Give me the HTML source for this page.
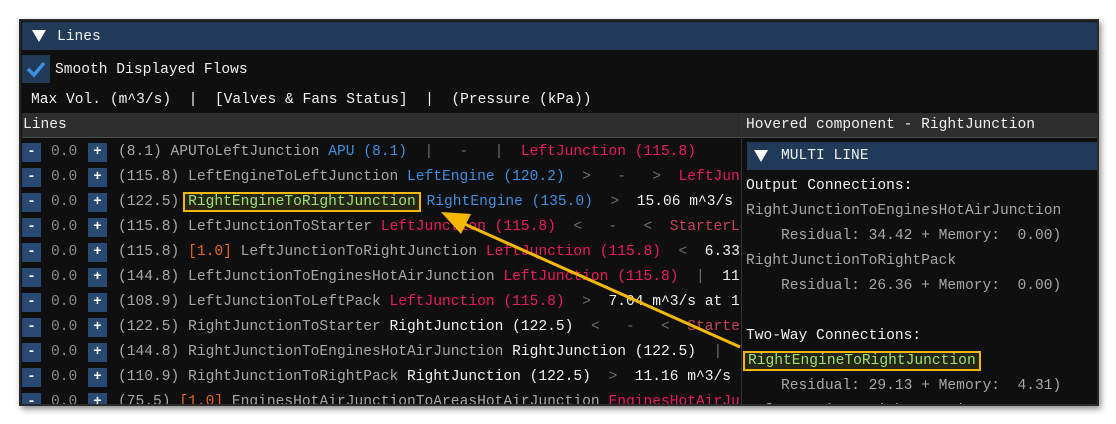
<!DOCTYPE html>
<html><head><meta charset="utf-8"><style>
*{margin:0;padding:0;box-sizing:border-box}
body{width:1116px;height:424px;background:#fff;position:relative;overflow:hidden;font-family:"Liberation Mono","DejaVu Sans Mono",monospace;font-size:14.6px;color:#e6e6e6}
.panel{position:absolute;left:19px;top:19px;width:1080px;height:387px;background:#0f0f0f;border:2px solid #2a2a2a;box-shadow:2px 3px 6px rgba(0,0,0,.45);overflow:hidden}
.a{position:absolute;white-space:pre;line-height:25px}
.hdr{position:absolute;left:1px;top:1px;width:1076px;height:28px;background:#213a58}
.g{color:#a6a6a6}.b{color:#3d8fe0}.r{color:#ec1a5c}.w{color:#f0f0f0}.d{color:#6e6e6e}.o{color:#e8650e}.dr{color:#c8405a}
.btn{position:absolute;width:19px;height:19px;background:#284a72;color:#fff;text-align:center;line-height:19px;font-weight:bold;font-size:14px}
.box{border:2px solid #f2b800;background:#25251a;color:#9de36a;padding:0 3px;margin-left:-5px;margin-right:-3px}
.bar{position:absolute;background:#2e2e2e;border-bottom:1px solid #4a4a4a;height:25px;line-height:24px}
.tri{position:absolute;width:0;height:0;border-left:7px solid transparent;border-right:7px solid transparent;border-top:12px solid #fff}
</style></head><body>
<div class="panel">
<div class="hdr"></div>
<div class="tri" style="left:11px;top:9px"></div>
<div class="a w" style="left:36px;top:4px">Lines</div>
<div style="position:absolute;left:1px;top:34px;width:28px;height:28px;background:#213a58"></div>
<svg style="position:absolute;left:4px;top:37px" width="22" height="22"><path d="M3 11 L9 17 L19 5" stroke="#3d8fe0" stroke-width="3.5" fill="none"/></svg>
<div class="a w" style="left:34px;top:37px">Smooth Displayed Flows</div>
<div class="a w" style="left:10px;top:67px">Max Vol. (m^3/s)  |  [Valves &amp; Fans Status]  |  (Pressure (kPa))</div>
<div class="bar" style="left:1px;top:92px;width:720px;padding-left:1px"><span class="w">Lines</span></div>
<div class="bar" style="left:721px;top:92px;width:356px;padding-left:4px"><span class="w">Hovered component - RightJunction</span></div>
<div style="position:absolute;left:720px;top:92px;width:1px;height:300px;background:#333"></div>
<div style="position:absolute;left:1px;top:119px;width:719px;height:280px;overflow:hidden">
<div class="btn" style="left:0;top:3px">-</div><div class="btn" style="left:66px;top:3px">+</div>
<div class="btn" style="left:0;top:28px">-</div><div class="btn" style="left:66px;top:28px">+</div>
<div class="btn" style="left:0;top:53px">-</div><div class="btn" style="left:66px;top:53px">+</div>
<div class="btn" style="left:0;top:78px">-</div><div class="btn" style="left:66px;top:78px">+</div>
<div class="btn" style="left:0;top:103px">-</div><div class="btn" style="left:66px;top:103px">+</div>
<div class="btn" style="left:0;top:128px">-</div><div class="btn" style="left:66px;top:128px">+</div>
<div class="btn" style="left:0;top:153px">-</div><div class="btn" style="left:66px;top:153px">+</div>
<div class="btn" style="left:0;top:178px">-</div><div class="btn" style="left:66px;top:178px">+</div>
<div class="btn" style="left:0;top:203px">-</div><div class="btn" style="left:66px;top:203px">+</div>
<div class="btn" style="left:0;top:228px">-</div><div class="btn" style="left:66px;top:228px">+</div>
<div class="btn" style="left:0;top:253px">-</div><div class="btn" style="left:66px;top:253px">+</div>
<div class="a d" style="left:29px;top:0;color:#8a8a8a">0.0<br>0.0<br>0.0<br>0.0<br>0.0<br>0.0<br>0.0<br>0.0<br>0.0<br>0.0<br>0.0</div>
<div class="a g" style="left:96px;top:0">(8.1) APUToLeftJunction <span class="b">APU (8.1)</span>  <span class="d">|   -   |</span>  <span class="r">LeftJunction (115.8)</span>
(115.8) LeftEngineToLeftJunction <span class="b">LeftEngine (120.2)</span>  <span class="d">&gt;   -   &gt;</span>  <span class="r">LeftJunction (115.8)</span>
(122.5) <span class="box">RightEngineToRightJunction</span> <span class="b">RightEngine (135.0)</span>  <span class="d">&gt;</span>  <span class="w">15.06 m^3/s at 135.0</span>
(115.8) LeftJunctionToStarter <span class="r">LeftJunction (115.8)</span>  <span class="d">&lt;   -   &lt;</span>  <span class="dr">StarterLeft</span>
(115.8) <span class="o">[1.0]</span> LeftJunctionToRightJunction <span class="r">LeftJunction (115.8)</span>  <span class="d">&lt;</span>  <span class="w">6.33 m^3/s</span>
(144.8) LeftJunctionToEnginesHotAirJunction <span class="r">LeftJunction (115.8)</span>  <span class="d">|</span>  <span class="w">11.00</span>
(108.9) LeftJunctionToLeftPack <span class="r">LeftJunction (115.8)</span>  <span class="d">&gt;</span>  <span class="w">7.04 m^3/s at 115</span>
(122.5) RightJunctionToStarter <span class="w">RightJunction (122.5)</span>  <span class="d">&lt;   -   &lt;</span>  <span class="dr">StarterRight</span>
(144.8) RightJunctionToEnginesHotAirJunction <span class="w">RightJunction (122.5)</span>  <span class="d">|</span>  <span class="w">11</span>
(110.9) RightJunctionToRightPack <span class="w">RightJunction (122.5)</span>  <span class="d">&gt;</span>  <span class="w">11.16 m^3/s</span>
(75.5) <span class="o">[1.0]</span> EnginesHotAirJunctionToAreasHotAirJunction <span class="r">EnginesHotAirJunction</span></div>
</div>
<div style="position:absolute;left:726px;top:121px;width:351px;height:28px;background:#213a58"></div>
<div class="tri" style="left:733px;top:129px"></div>
<div class="a w" style="left:760px;top:123px">MULTI LINE</div>
<div class="a g" style="left:725px;top:153px"><span class="w">Output Connections:</span>
RightJunctionToEnginesHotAirJunction
    Residual: 34.42 + Memory:  0.00)
RightJunctionToRightPack
    Residual: 26.36 + Memory:  0.00)

<span class="w">Two-Way Connections:</span>
<span class="box" style="margin-left:-3px">RightEngineToRightJunction</span>
    Residual: 29.13 + Memory:  4.31)
LeftJunctionToRightJunction</div>
</div>
<svg style="position:absolute;left:0;top:0" width="1116" height="424">
<line x1="740" y1="347" x2="460" y2="222" stroke="#f5b800" stroke-width="3"/>
<polygon points="441,212 471,214 461,234" fill="#f5b800"/>
</svg>
</body></html>
